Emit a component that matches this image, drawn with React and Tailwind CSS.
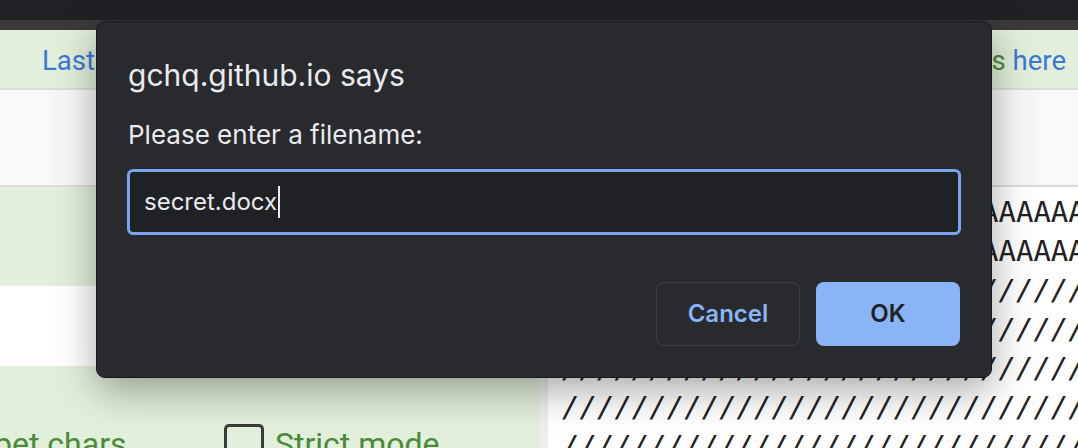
import React from "react";

const A_ROW = "A".repeat(120);
const SLASH_ROW = "/".repeat(60);

export default function App() {
  return (
    <div className="relative w-[1078px] h-[448px] overflow-hidden bg-white font-['Roboto',sans-serif]">
      <div className="h-[20px] bg-[#202124]" />
      <div className="h-[10px] bg-[#3a3a3a]" />
      <div className="h-[58px] bg-[#e2efda] flex items-center justify-between pl-[42px] pr-[12px] text-[27.5px] leading-[32px] pt-[4px]">
        <span className="text-[#3b78d6]">Last</span>
        <span>
          <span className="text-[#4a8a3a]">Inputs </span>
          <span className="text-[#3b78d6]">here</span>
        </span>
      </div>
      <div className="h-[97px] border-t-2 border-[#dcdcdc] bg-[#f8f8f8]" />
      <div className="flex h-[263px] border-t-2 border-[#dcdcdc]">
        <div className="w-[540px] flex flex-col">
          <div className="h-[99px] shrink-0 bg-[#e2efda]" />
          <div className="h-[80px] shrink-0 bg-white" />
          <div className="flex-1 min-h-0 bg-[#e2efda] flex items-start pt-[58px]">
            <span className="-ml-[6px] w-[230px] shrink-0 mt-[2px] text-[32px] leading-[36px] text-[#4a8a3a] whitespace-nowrap">bet chars</span>
            <div className="w-[40px] h-[40px] shrink-0 border-[3px] border-[#3a3a3a] rounded-[5px]" />
            <span className="ml-[11px] mt-[2px] text-[32px] leading-[36px] text-[#4a8a3a] whitespace-nowrap">Strict mode</span>
          </div>
        </div>
        <div className="w-[8px] bg-[#eeeeee]" />
        <div className="flex-1 bg-white overflow-hidden pl-[14px] pt-[6px] font-['DejaVu_Sans_Mono',monospace] text-[29px] leading-[39px] text-[#222] whitespace-nowrap">
          <div>{A_ROW}</div>
          <div>{A_ROW}</div>
          <div className="italic">{SLASH_ROW}</div>
          <div className="italic">{SLASH_ROW}</div>
          <div className="italic">{SLASH_ROW}</div>
          <div className="italic">{SLASH_ROW}</div>
          <div className="italic">{SLASH_ROW}</div>
        </div>
      </div>

      <div className="absolute left-[96px] top-[21px] w-[896px] h-[357px] rounded-[9px] bg-[#292a2d] border border-[#18191b] shadow-[0_12px_40px_rgba(0,0,0,0.35)] px-[30px] pt-[35px] font-['Inter',sans-serif] flex flex-col">
        <div className="pl-[1px] text-[30px] leading-[36px] text-[#e8eaed]">gchq.github.io says</div>
        <div className="pl-[1px] mt-[27px] text-[26px] leading-[30px] text-[#e8eaed]">Please enter a filename:</div>
        <div className="mt-[19px] h-[66px] w-[834px] rounded-[6px] border-[3px] border-[#7ba3ef] bg-[#202124] flex items-center pl-[14px] text-[24px] text-[#e8eaed]">
          <span>secret.docx</span>
          <span className="ml-[1px] w-[2px] h-[32px] bg-[#e8eaed]" />
        </div>
        <div className="mt-[47px] flex justify-end gap-[16px] w-[833px]">
          <div className="w-[144px] h-[64px] rounded-[8px] border border-[#3c4043] flex items-center justify-center text-[24px] font-semibold text-[#8ab4f8]">Cancel</div>
          <div className="w-[144px] h-[64px] rounded-[8px] bg-[#8ab4f8] flex items-center justify-center text-[24px] font-semibold text-[#202124]">OK</div>
        </div>
      </div>
    </div>
  );
}
